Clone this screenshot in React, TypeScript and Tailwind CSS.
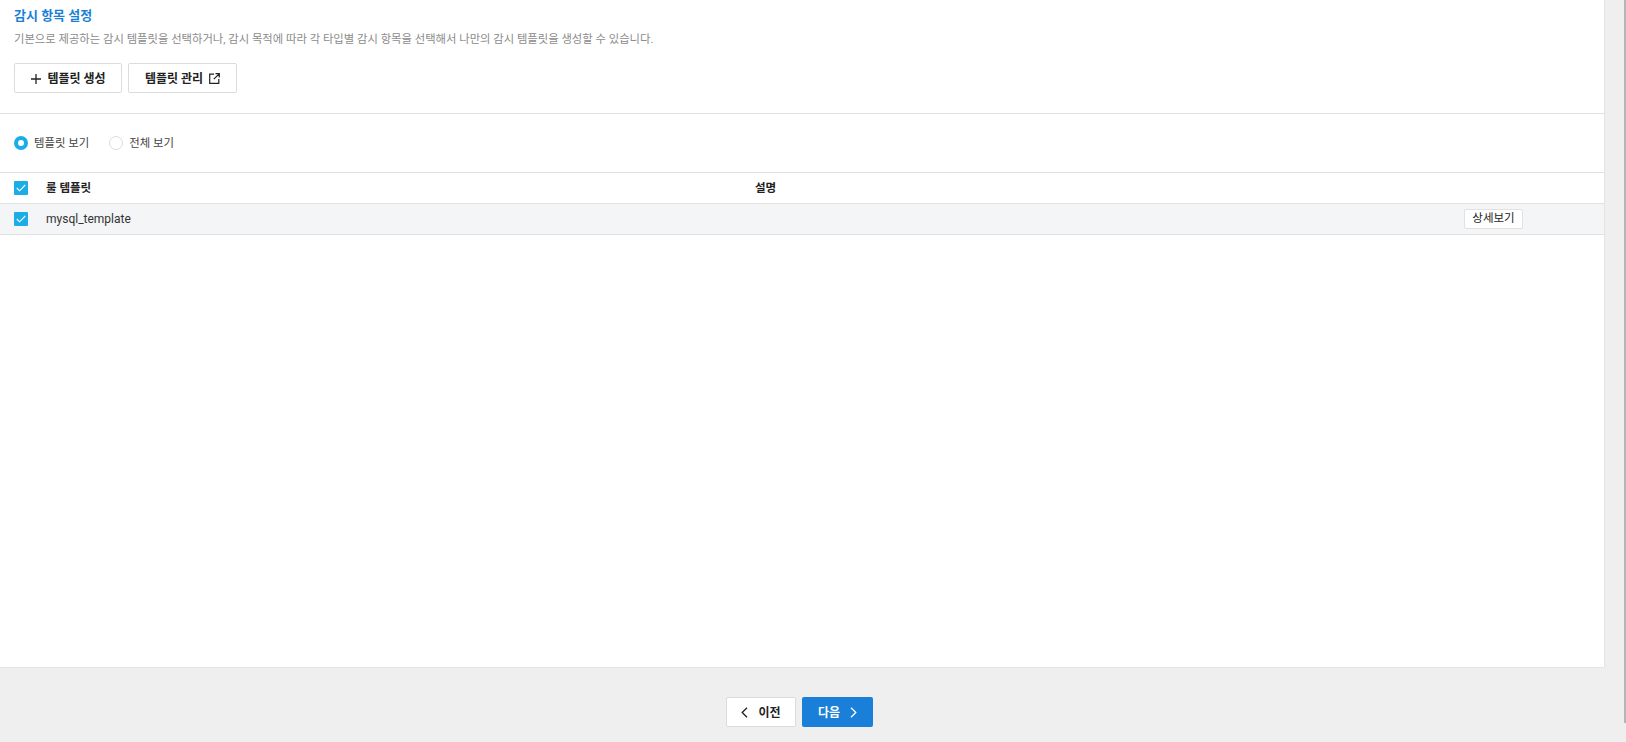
import React from "react";

const F = "[font-family:Roboto,'Noto_Sans_CJK_KR',sans-serif]";

function Check() {
  return (
    <span className="flex h-[14px] w-[14px] shrink-0 items-center justify-center rounded-[1px] bg-[#1bade8]">
      <svg width="10" height="8" viewBox="0 0 10 8" fill="none">
        <path d="M0.8 4 L3.6 6.8 L9.2 1" stroke="#fff" strokeWidth="1.1" />
      </svg>
    </span>
  );
}

export default function App() {
  return (
    <div className={`flex h-[742px] w-full overflow-hidden bg-[#efefef] text-[12px] text-[#222] ${F}`}>
      <div className="flex w-[1624px] shrink-0 flex-col">
        <div className="flex h-[668px] w-[1605px] flex-col rounded-br-[2px] border-r border-b border-[#e4e4e4] bg-white">
          <div className="h-[114px] border-b border-[#e1e1e1] px-[14px] pt-[7px]">
            <h2 className="text-[13px] leading-[18px] font-bold text-[#1a7fd8]">감시 항목 설정</h2>
            <p className="mt-[5px] text-[11.33px] leading-[18px] text-[#8b8b8b]">
              기본으로 제공하는 감시 템플릿을 선택하거나, 감시 목적에 따라 각 타입별 감시 항목을 선택해서 나만의 감시 템플릿을 생성할 수 있습니다.
            </p>
            <div className="mt-[15px] flex gap-[6px]">
              <button className="flex h-[30px] w-[108px] items-center justify-center gap-[5px] rounded-[2px] border border-[#dcdcdc] bg-white pt-[1px] text-[12px] font-bold text-[#222]">
                <svg width="12" height="12" viewBox="0 0 12 12" fill="none">
                  <path d="M6 1 V11 M1 6 H11" stroke="#222" strokeWidth="1.3" />
                </svg>
                템플릿 생성
              </button>
              <button className="flex h-[30px] w-[109px] items-center justify-center gap-[6px] rounded-[2px] border border-[#dcdcdc] bg-white pt-[1px] text-[12px] font-bold text-[#222]">
                템플릿 관리
                <svg width="11" height="11" viewBox="0 0 11 11" fill="none">
                  <path d="M5 1.2 H0.7 V10.3 H9.8 V6 M6.5 0.7 H10.3 V4.5 M10.2 0.8 L4.8 6.2" stroke="#222" strokeWidth="1.2" />
                </svg>
              </button>
            </div>
          </div>
          <div className="flex h-[58px] items-center px-[14px] pt-[1px] text-[11.4px]">
            <label className="flex items-center gap-[6px]">
              <span className="flex h-[14px] w-[14px] items-center justify-center rounded-full bg-[#1bade8]">
                <span className="h-[6px] w-[6px] rounded-full bg-white" />
              </span>
              <span className="text-[#444]">템플릿 보기</span>
            </label>
            <label className="ml-[20px] flex items-center gap-[6px]">
              <span className="h-[14px] w-[14px] rounded-full border border-[#dcdcdc] bg-white" />
              <span className="text-[#444]">전체 보기</span>
            </label>
          </div>
          <div className="flex h-[32px] items-center border-y border-[#e1e1e1] text-[11.5px] font-bold">
            <span className="flex w-[46px] shrink-0 pl-[14px]"><Check /></span>
            <span className="w-[709px] shrink-0 pt-[1px]">룰 템플릿</span>
            <span className="pt-[1px]">설명</span>
          </div>
          <div className="flex h-[31px] items-center border-b border-[#e1e1e1] bg-[#f4f5f7]">
            <span className="flex w-[46px] shrink-0 pl-[14px]"><Check /></span>
            <span className="w-[709px] shrink-0 text-[#333]">mysql_template</span>
            <button className="ml-[709px] flex h-[20px] w-[59px] items-center justify-center rounded-[2px] border border-[#e1e1e1] bg-white text-[11.5px] text-[#222]">
              상세보기
            </button>
          </div>
        </div>
        <div className="mt-[29px] flex w-[1599px] justify-center gap-[6px]">
          <button className="flex h-[30px] w-[70px] items-center justify-center gap-[10px] rounded-[2px] border border-[#dcdcdc] bg-white pt-[1px] font-bold text-[#222]">
            <svg width="7" height="11" viewBox="0 0 7 11" fill="none">
              <path d="M6 0.7 L1.2 5.5 L6 10.3" stroke="#222" strokeWidth="1.3" />
            </svg>
            이전
          </button>
          <button className="flex h-[30px] w-[71px] items-center justify-center gap-[10px] rounded-[2px] bg-[#1a7fd8] pt-[1px] font-bold text-white">
            다음
            <svg width="7" height="11" viewBox="0 0 7 11" fill="none">
              <path d="M1 0.7 L5.8 5.5 L1 10.3" stroke="#fff" strokeWidth="1.3" />
            </svg>
          </button>
        </div>
      </div>
      <div className="h-[723px] w-[2px] bg-[#b5b5b5]" />
    </div>
  );
}
